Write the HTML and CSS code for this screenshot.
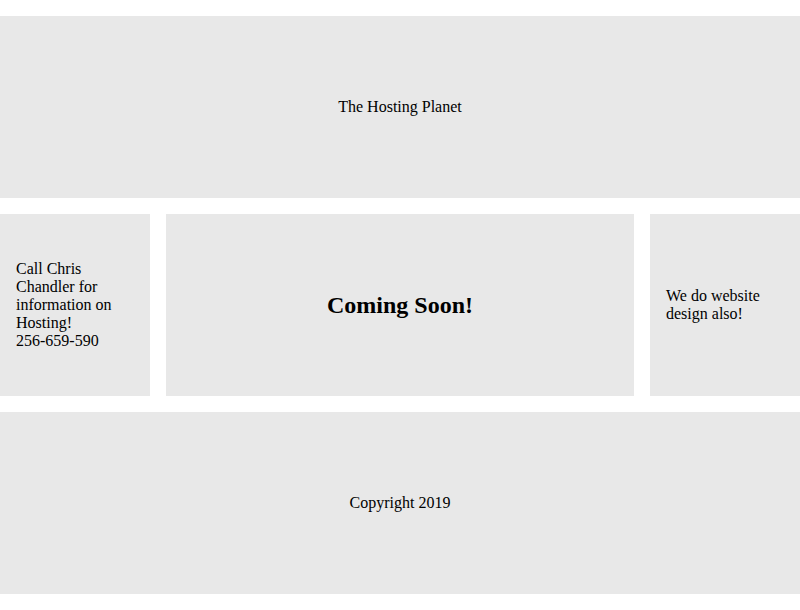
FILE: index.html
```html
<!DOCTYPE html>
<html>
<head>
<meta charset="utf-8">
<link rel="stylesheet" href="styles.css">
</head>
<body>
<div class="grid">
  <header class="cell header">The Hosting Planet</header>
  <aside class="cell side"><p>Call Chris Chandler for information on Hosting!<br>256-659-590</p></aside>
  <main class="cell main"><h2>Coming Soon!</h2></main>
  <aside class="cell side"><p>We do website design also!</p></aside>
  <footer class="cell footer">Copyright 2019</footer>
</div>
</body>
</html>
```
FILE: styles.css
```css
html, body {
  margin: 0;
  padding: 0;
  background: #fff;
}
body {
  font-family: "Liberation Serif", "Times New Roman", serif;
  font-size: 16px;
  color: #000;
}
.grid {
  display: grid;
  grid-template-columns: 150px 1fr 150px;
  grid-template-rows: 182px 182px 182px;
  gap: 16px;
  padding: 16px 0;
}
.cell {
  background: #e8e8e8;
  display: flex;
  align-items: center;
}
.header, .footer {
  grid-column: 1 / 4;
  justify-content: center;
}
.side {
  padding: 0 16px;
}
.side p {
  margin: 0;
}
.main {
  justify-content: center;
}
.main h2 {
  margin: 0;
  font-size: 24px;
  font-weight: bold;
}
```
